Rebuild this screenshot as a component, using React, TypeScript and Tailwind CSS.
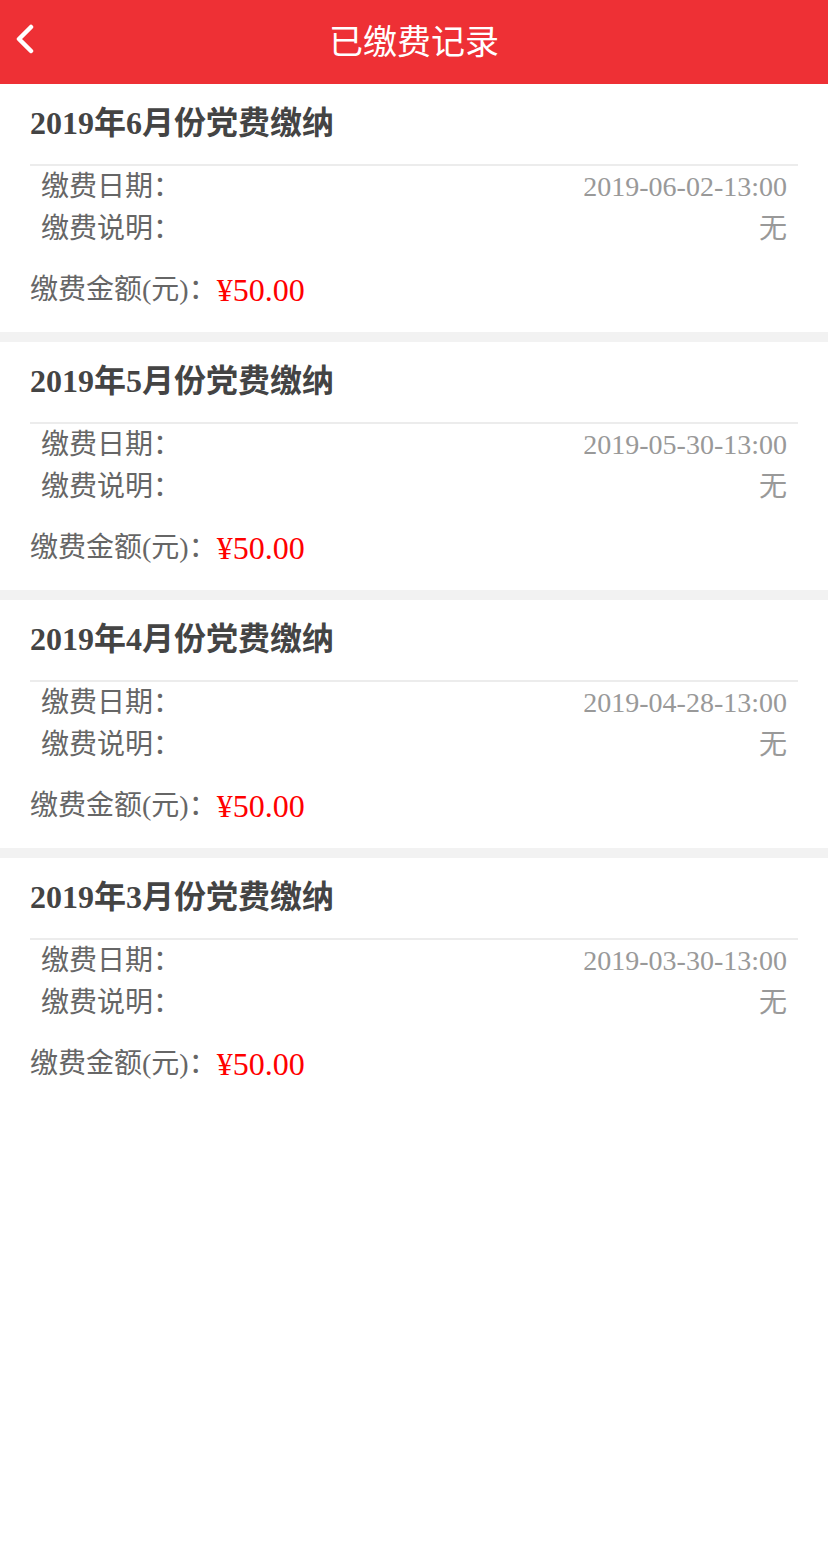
const records = [
  { month: '6', date: '2019-06-02-13:00' },
  { month: '5', date: '2019-05-30-13:00' },
  { month: '4', date: '2019-04-28-13:00' },
  { month: '3', date: '2019-03-30-13:00' },
];

const font = { fontFamily: '"Liberation Serif", "Noto Sans CJK SC", serif' };

const App = () => {
  return (
    <div className="min-h-[1544px] w-[828px] bg-white" style={font}>
      <header className="relative flex h-[84px] items-center justify-center bg-[#ee3035]">
        <svg
          className="absolute left-[12px] top-[24px]"
          width="26"
          height="30"
          viewBox="0 0 26 30"
          fill="none"
        >
          <polyline
            points="19,3 7,15 19,27"
            stroke="white"
            strokeWidth="4.5"
            strokeLinecap="round"
            strokeLinejoin="round"
          />
        </svg>
        <h1 className="pb-[4px] text-[34px] leading-none text-white" style={{ fontFamily: '"Noto Sans CJK SC", sans-serif' }}>
          已缴费记录
        </h1>
      </header>

      {records.map((r, i) => (
        <div key={i} className="border-b-[10px] border-[#f2f2f2] px-[30px] last:border-b-0">
          <div className="flex h-[80px] items-center pb-[2px] text-[32px] font-bold text-[#444]">
            2019年{r.month}月份党费缴纳
          </div>
          <div className="border-t-2 border-[#ececec] pl-[11px] pr-[11px]">
            <div className="flex h-[42px] items-center justify-between text-[28px]">
              <span className="text-[#666]">缴费日期：</span>
              <span className="text-[#999]">{r.date}</span>
            </div>
            <div className="flex h-[42px] items-center justify-between text-[28px]">
              <span className="text-[#666]">缴费说明：</span>
              <span className="text-[#999]">无</span>
            </div>
          </div>
          <div className="flex h-[82px] items-center pb-[2px]">
            <span className="text-[28px] text-[#666]">缴费金额(元)：</span>
            <span className="text-[32px] text-[#ff0000]">¥50.00</span>
          </div>
        </div>
      ))}
    </div>
  );
};

export default App;
